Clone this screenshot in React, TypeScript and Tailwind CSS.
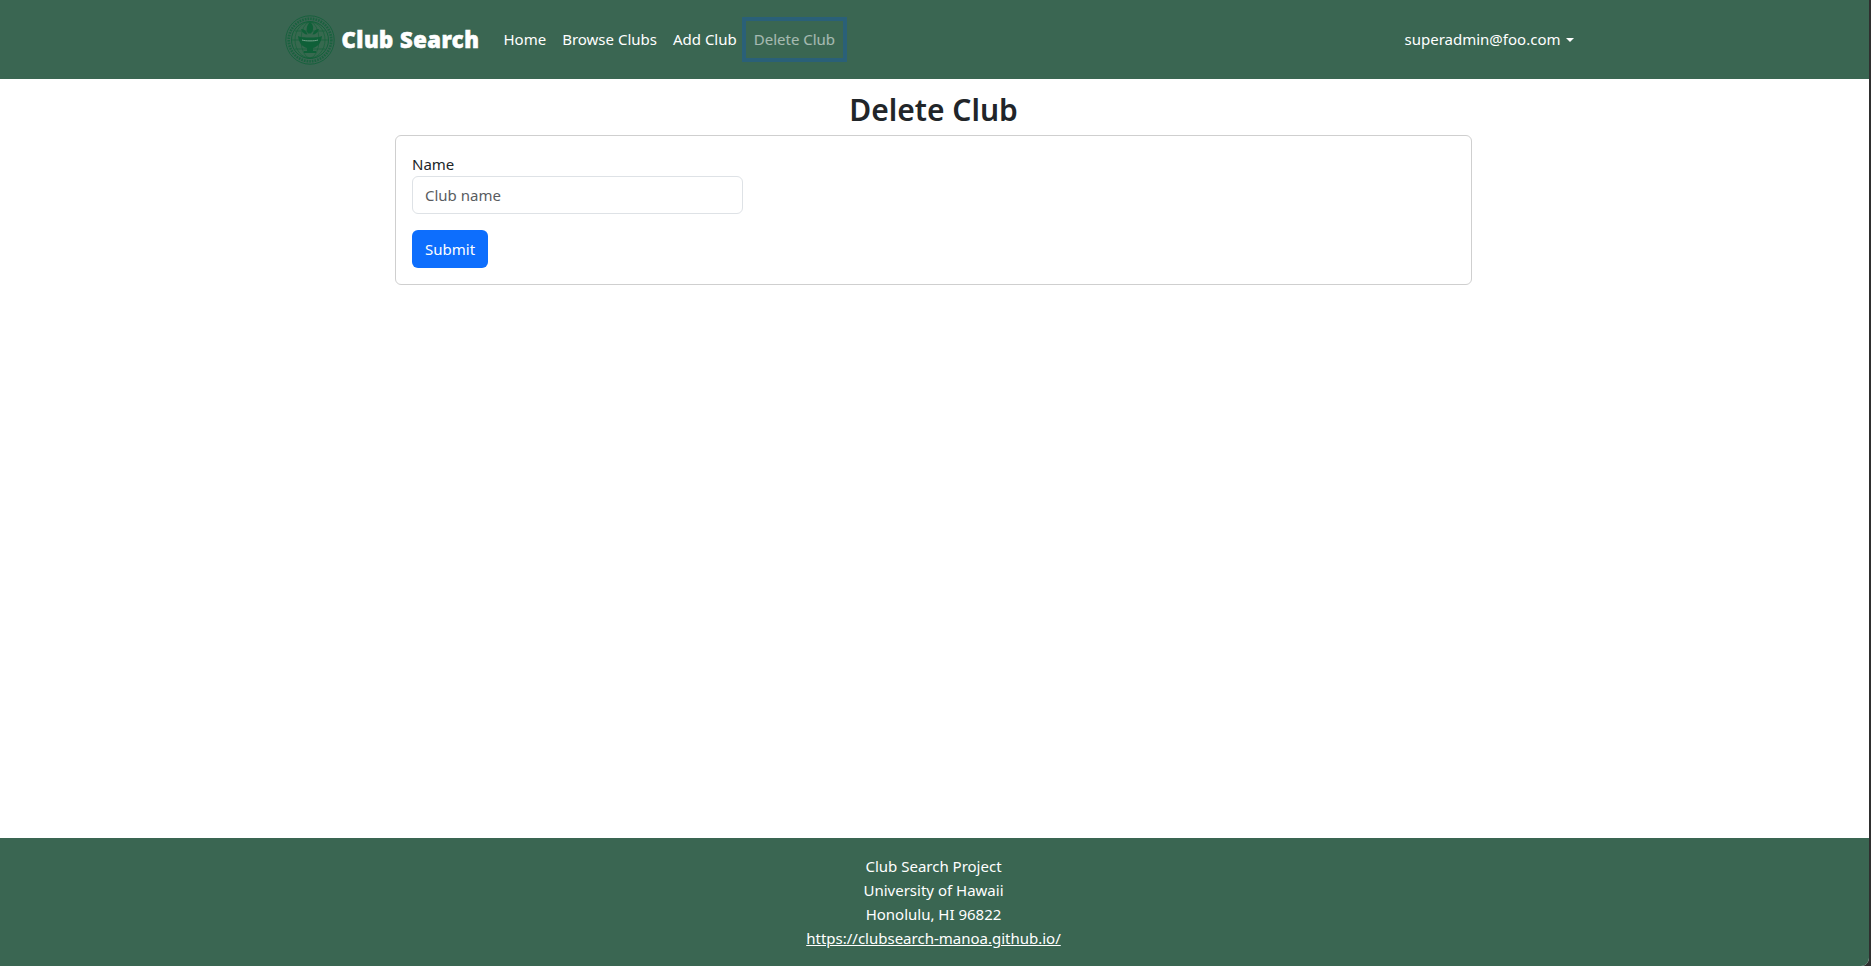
const NAV_LINKS = ["Home", "Browse Clubs", "Add Club"];

function Seal() {
  return (
    <svg width="50" height="50" viewBox="0 0 50 50" className="shrink-0" aria-hidden="true">
      <circle cx="25" cy="25" r="24.2" fill="none" stroke="#0f6038" strokeWidth="0.8" />
      <circle cx="25" cy="25" r="21.3" fill="none" stroke="#0f6038" strokeWidth="2.6" strokeDasharray="1.6 1.1" opacity="0.75" />
      <circle cx="25" cy="25" r="18.5" fill="#37694f" stroke="#0f6038" strokeWidth="0.9" />
      <g fill="none" stroke="#0f6038" strokeWidth="0.6">
        <ellipse cx="25" cy="25" rx="9" ry="18" />
        <ellipse cx="25" cy="25" rx="15" ry="18" />
        <path d="M7 25h36M10 16h30M10 34h30" />
      </g>
      <path d="M13 21c3 2 21 2 24 0-1 8-5 11-9 12v3h3v2H19v-2h3v-3c-4-1-8-4-9-12z" fill="#0f6038" />
      <path d="M25 7c4 3 4 8 1 11.5h-3c-2-3-2-7.500 2-11.500z" fill="#0f6038" />
      <path d="M16 14c3 0 5.500 2 6.500 5.500-3 0-5.500-2-6.500-5.500zM34 14c-3 0-5.500 2-6.500 5.500 3 0 5.500-2 6.500-5.500z" fill="#0f6038" />
      <path d="M17 25c3 1.200 13 1.200 16 0" fill="none" stroke="#7fa893" strokeWidth="0.9" />
    </svg>
  );
}

export default function App() {
  return (
    <div className="min-h-[966px] bg-[#2f2f2f]">
      <div className="flex min-h-[966px] w-[1869px] flex-col overflow-hidden rounded-br-[8px] bg-white font-['Noto_Sans','Open_Sans',sans-serif] text-[15px] text-[#212529]">
        <nav className="h-[79px] bg-[#3a6652] pr-[2px] text-white">
          <div className="mx-auto flex h-full w-[1320px] items-center pl-[11px] pr-[12px]">
            <a className="flex items-center">
              <Seal />
              <span className="ml-[7px] text-[22px] font-black tracking-[0.5px] text-white [-webkit-text-stroke:0.6px_white]">
                Club Search
              </span>
            </a>
            <div className="ml-[16px] flex items-center">
              {NAV_LINKS.map((label) => (
                <a key={label} className="px-[8px] py-[8px] whitespace-nowrap">
                  {label}
                </a>
              ))}
              <a className="-ml-[3px] border-[4px] border-[#2a6078] px-[8px] py-[8px] leading-[21px] whitespace-nowrap text-white/55">
                Delete Club
              </a>
            </div>
            <div className="ml-auto flex items-center gap-[5px] pr-[8px]">
              <span>superadmin@foo.com</span>
              <span className="h-0 w-0 border-x-[4px] border-t-[4px] border-x-transparent border-t-white" />
            </div>
          </div>
        </nav>

        <main className="flex-1 pr-[2px]">
          <h1 className="pt-[12px] text-center text-[30px] leading-[38px] font-semibold">Delete Club</h1>
          <div className="mx-auto mt-[6px] w-[1077px] rounded-[6px] border border-[#cfcfcf] p-[16px]">
            <label className="block leading-[24px]">Name</label>
            <input
              placeholder="Club name"
              className="block h-[38px] w-[331px] rounded-[6px] border border-[#dee2e6] px-[12px] placeholder:text-[#595c5f]"
            />
            <button className="mt-[16px] h-[38px] rounded-[6px] bg-[#0d6efd] px-[13px] text-white">Submit</button>
          </div>
        </main>

        <footer className="h-[128px] bg-[#3a6652] pt-[16px] pr-[2px] text-center leading-[24px] text-white">
          <p>Club Search Project</p>
          <p>University of Hawaii</p>
          <p>Honolulu, HI 96822</p>
          <a className="underline">https://clubsearch-manoa.github.io/</a>
        </footer>
      </div>
    </div>
  );
}
